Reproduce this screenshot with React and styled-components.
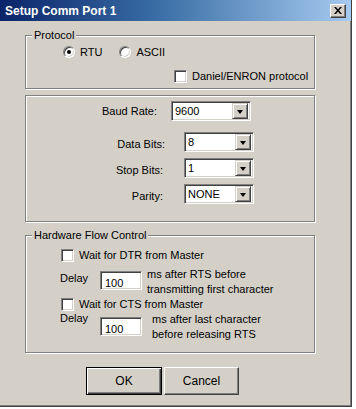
import styled, { createGlobalStyle } from "styled-components";

const GlobalStyle = createGlobalStyle`
  html, body {
    margin: 0;
    padding: 0;
    background: #ffffff;
  }
  body {
    font-family: "Liberation Sans", Arial, sans-serif;
    font-size: 11px;
    color: #000;
  }
`;

const App = () => {
  return (
    <>
      <GlobalStyle />
      <Window>
        <TitleBar>
          <Title>Setup Comm Port 1</Title>
          <CloseButton>
            <svg width="8" height="7" viewBox="0 0 8 7">
              <path d="M0 0h2l2 2.5L6 0h2L5 3.5 8 7H6L4 4.5 2 7H0l3-3.5z" fill="#000" />
            </svg>
          </CloseButton>
        </TitleBar>

        <Body>
          <Group $top={14} $height={54}>
            <Legend>Protocol</Legend>
            <OptionRow $top={9} $left={37}>
              <Radio $checked />
              <OptionText>RTU</OptionText>
              <Radio $gap={17} />
              <OptionText>ASCII</OptionText>
            </OptionRow>
            <OptionRow $top={10} $left={148}>
              <Check />
              <OptionText>Daniel/ENRON protocol</OptionText>
            </OptionRow>
          </Group>

          <Group $top={6} $height={127}>
            <FieldRow $top={5}>
              <FieldLabel $width={131} $drop={0}>Baud Rate:</FieldLabel>
              <Combo $gap={14} $width={80}>
                <ComboText>9600</ComboText>
                <DropButton><Arrow /></DropButton>
              </Combo>
            </FieldRow>
            <FieldRow $top={11}>
              <FieldLabel $width={139} $drop={3}>Data Bits:</FieldLabel>
              <Combo $gap={19} $width={70}>
                <ComboText>8</ComboText>
                <DropButton><Arrow /></DropButton>
              </Combo>
            </FieldRow>
            <FieldRow $top={6}>
              <FieldLabel $width={137} $drop={4}>Stop Bits:</FieldLabel>
              <Combo $gap={21} $width={70}>
                <ComboText>1</ComboText>
                <DropButton><Arrow /></DropButton>
              </Combo>
            </FieldRow>
            <FieldRow $top={6}>
              <FieldLabel $width={137} $drop={4}>Parity:</FieldLabel>
              <Combo $gap={21} $width={70}>
                <ComboText>NONE</ComboText>
                <DropButton><Arrow /></DropButton>
              </Combo>
            </FieldRow>
          </Group>

          <Group $top={13} $height={118}>
            <Legend>Hardware Flow Control</Legend>
            <OptionRow $top={12} $left={35}>
              <Check />
              <OptionText>Wait for DTR from Master</OptionText>
            </OptionRow>
            <DelayRow $top={5}>
              <DelayLabel $drop={4}>Delay</DelayLabel>
              <Edit $drop={4}>100</Edit>
              <Note $gap={5}>
                ms after RTS before<br />transmitting first character
              </Note>
            </DelayRow>
            <OptionRow $top={0} $left={35}>
              <Check />
              <OptionText>Wait for CTS from Master</OptionText>
            </OptionRow>
            <DelayRow $top={1}>
              <DelayLabel $drop={-1}>Delay</DelayLabel>
              <Edit $drop={5}>100</Edit>
              <Note $gap={10}>
                ms after last character<br />before releasing RTS
              </Note>
            </DelayRow>
          </Group>

          <ButtonRow>
            <Button $default>OK</Button>
            <Button>Cancel</Button>
          </ButtonRow>
        </Body>
      </Window>
    </>
  );
};

export default App;

const Window = styled.div`
  width: 351px;
  height: 406px;
  display: flex;
  flex-direction: column;
  background: #d4d0c8;
  border-right: 1px solid #404040;
  border-bottom: 1px solid #404040;
  box-shadow: inset -1px -1px 0 #808080;
`;

const TitleBar = styled.div`
  height: 21px;
  display: flex;
  align-items: center;
  justify-content: space-between;
  padding: 0 5px 0 5px;
  background: linear-gradient(to right, #0a246a 0%, #3a6ea5 45%, #a6caf0 100%);
`;

const Title = styled.span`
  color: #fff;
  font-weight: bold;
  font-size: 12px;
`;

const CloseButton = styled.div`
  width: 16px;
  height: 14px;
  box-sizing: border-box;
  display: flex;
  align-items: center;
  justify-content: center;
  background: #d4d0c8;
  border-top: 1px solid #fff;
  border-left: 1px solid #fff;
  border-right: 1px solid #404040;
  border-bottom: 1px solid #404040;
  box-shadow: inset -1px -1px 0 #808080;
`;

const Body = styled.div`
  display: flex;
  flex-direction: column;
  padding-left: 25px;
`;

const Group = styled.div`
  position: relative;
  width: 290px;
  height: ${({ $height }) => $height}px;
  margin-top: ${({ $top }) => $top}px;
  box-sizing: border-box;
  border: 1px solid #808080;
  box-shadow: 1px 1px 0 #fff, inset 1px 1px 0 #fff;
  display: flex;
  flex-direction: column;
`;

const Legend = styled.span`
  position: absolute;
  top: -8px;
  left: 6px;
  padding: 0 2px;
  line-height: 14px;
  background: #d4d0c8;
`;

const OptionRow = styled.div`
  display: flex;
  align-items: center;
  height: 14px;
  margin-top: ${({ $top }) => $top}px;
  padding-left: ${({ $left }) => $left}px;
`;

const Radio = styled.span`
  position: relative;
  width: 12px;
  height: 12px;
  box-sizing: border-box;
  border-radius: 50%;
  margin-left: ${({ $gap }) => $gap || 0}px;
  background: #fff;
  border-top: 1px solid #808080;
  border-left: 1px solid #808080;
  border-right: 1px solid #fff;
  border-bottom: 1px solid #fff;
  box-shadow: inset 1px 1px 0 #404040, inset -1px -1px 0 #d4d0c8;

  &::after {
    content: "";
    display: ${({ $checked }) => ($checked ? "block" : "none")};
    position: absolute;
    left: 3px;
    top: 3px;
    width: 4px;
    height: 4px;
    border-radius: 50%;
    background: #000;
  }
`;

const Check = styled.span`
  width: 13px;
  height: 13px;
  box-sizing: border-box;
  background: #fff;
  border-top: 1px solid #808080;
  border-left: 1px solid #808080;
  border-right: 1px solid #fff;
  border-bottom: 1px solid #fff;
  box-shadow: inset 1px 1px 0 #404040, inset -1px -1px 0 #d4d0c8;
`;

const OptionText = styled.span`
  margin-left: 5px;
  white-space: nowrap;
`;

const FieldRow = styled.div`
  display: flex;
  align-items: center;
  height: 20px;
  margin-top: ${({ $top }) => $top}px;
`;

const FieldLabel = styled.span`
  width: ${({ $width }) => $width}px;
  text-align: right;
  padding-top: ${({ $drop }) => $drop}px;
`;

const Combo = styled.div`
  width: ${({ $width }) => $width}px;
  height: 20px;
  margin-left: ${({ $gap }) => $gap}px;
  box-sizing: border-box;
  display: flex;
  align-items: center;
  justify-content: space-between;
  background: #fff;
  border-top: 1px solid #808080;
  border-left: 1px solid #808080;
  border-right: 1px solid #fff;
  border-bottom: 1px solid #fff;
  box-shadow: inset 1px 1px 0 #404040, inset -1px -1px 0 #d4d0c8;
  padding: 2px;
`;

const ComboText = styled.span`
  padding-left: 1px;
`;

const DropButton = styled.span`
  width: 16px;
  height: 16px;
  box-sizing: border-box;
  display: flex;
  align-items: center;
  justify-content: center;
  background: #d4d0c8;
  border-top: 1px solid #d4d0c8;
  border-left: 1px solid #d4d0c8;
  border-right: 1px solid #404040;
  border-bottom: 1px solid #404040;
  box-shadow: inset 1px 1px 0 #fff, inset -1px -1px 0 #808080;
`;

const Arrow = styled.span`
  width: 0;
  height: 0;
  border-left: 3.5px solid transparent;
  border-right: 3.5px solid transparent;
  border-top: 4px solid #000;
  margin-top: 1px;
`;

const DelayRow = styled.div`
  display: flex;
  align-items: flex-start;
  margin-top: ${({ $top }) => $top}px;
  padding-left: 34px;
`;

const DelayLabel = styled.span`
  width: 40px;
  line-height: 15px;
  margin-top: ${({ $drop }) => $drop}px;
`;

const Edit = styled.div`
  width: 42px;
  height: 19px;
  margin-top: ${({ $drop }) => $drop}px;
  box-sizing: border-box;
  padding: 5px 0 0 4px;
  line-height: 12px;
  background: #fff;
  border-top: 1px solid #808080;
  border-left: 1px solid #808080;
  border-right: 1px solid #fff;
  border-bottom: 1px solid #fff;
  box-shadow: inset 1px 1px 0 #404040, inset -1px -1px 0 #d4d0c8;
`;

const Note = styled.div`
  margin-left: ${({ $gap }) => $gap}px;
  line-height: 15px;
`;

const ButtonRow = styled.div`
  display: flex;
  gap: 2px;
  margin-top: 14px;
  padding-left: 61px;
`;

const Button = styled.div`
  width: ${({ $default }) => ($default ? 76 : 75)}px;
  height: 28px;
  box-sizing: border-box;
  display: flex;
  align-items: center;
  justify-content: center;
  background: #d4d0c8;
  border: 1px solid ${({ $default }) => ($default ? "#000" : "#fff")};
  ${({ $default }) =>
    $default
      ? "box-shadow: inset 1px 1px 0 #fff, inset -1px -1px 0 #404040, inset -2px -2px 0 #808080;"
      : "border-right-color: #404040; border-bottom-color: #404040; box-shadow: inset -1px -1px 0 #808080;"}
  font-size: 12px;
`;
